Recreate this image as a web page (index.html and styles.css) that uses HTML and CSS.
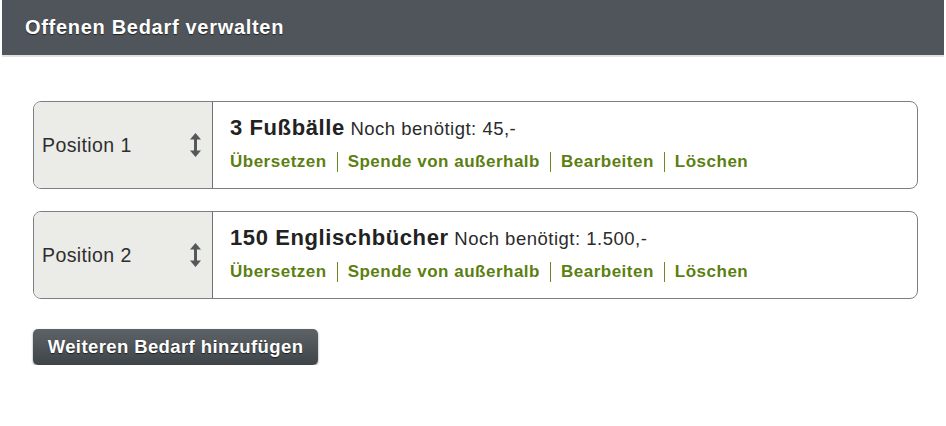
FILE: index.html
```html
<!DOCTYPE html>
<html>
<head>
<meta charset="utf-8">
<link rel="stylesheet" href="styles.css">
</head>
<body>
<div class="header"><h1 class="title">Offenen Bedarf verwalten</h1></div>
<div class="content">
  <div class="card">
    <div class="pos">
      <span class="pos-label">Position 1</span>
      <svg class="arrow" width="13" height="26" viewBox="0 0 13 26"><path d="M6.5 1 L12 7.5 L8 7.5 L8 18.5 L12 18.5 L6.5 25 L1 18.5 L5 18.5 L5 7.5 L1 7.5 Z" fill="#55585b"/></svg>
    </div>
    <div class="info">
      <div class="name"><b>3 Fußbälle</b> Noch benötigt: 45,-</div>
      <div class="links"><a>Übersetzen</a><a>Spende von außerhalb</a><a>Bearbeiten</a><a>Löschen</a></div>
    </div>
  </div>
  <div class="card">
    <div class="pos">
      <span class="pos-label">Position 2</span>
      <svg class="arrow" width="13" height="26" viewBox="0 0 13 26"><path d="M6.5 1 L12 7.5 L8 7.5 L8 18.5 L12 18.5 L6.5 25 L1 18.5 L5 18.5 L5 7.5 L1 7.5 Z" fill="#55585b"/></svg>
    </div>
    <div class="info">
      <div class="name"><b>150 Englischbücher</b> Noch benötigt: 1.500,-</div>
      <div class="links"><a>Übersetzen</a><a>Spende von außerhalb</a><a>Bearbeiten</a><a>Löschen</a></div>
    </div>
  </div>
  <button class="btn">Weiteren Bedarf hinzufügen</button>
</div>
</body>
</html>
```
FILE: styles.css
```css
body {
  margin: 0;
  background: #fff;
  font-family: "Liberation Sans", Arial, sans-serif;
  color: #2b2b2b;
}
.header {
  margin: 0 2px;
  height: 55px;
  background: #50555b;
  border-bottom: 2px solid #dfe3e6;
  display: flex;
  align-items: center;
}
.title {
  margin: 0 0 0 23px;
  font-size: 20px;
  letter-spacing: 0.7px;
  font-weight: bold;
  color: #fff;
  text-shadow: 0 1px 1px rgba(0,0,0,0.6);
}
.content {
  padding: 44px 28px 0 33px;
}
.card {
  display: flex;
  height: 86px;
  border: 1px solid #7c7f82;
  border-radius: 8px;
  overflow: hidden;
  margin-bottom: 22px;
}
.pos {
  width: 179px;
  flex: none;
  background: #ebebe7;
  border-right: 1px solid #6f7275;
  display: flex;
  align-items: center;
  justify-content: space-between;
  padding: 0 10px 0 8px;
  box-sizing: border-box;
}
.pos-label {
  font-size: 19.5px;
  letter-spacing: 0.4px;
  color: #2e2e2e;
}
.arrow { display: block; }
.info {
  padding: 13px 0 0 17px;
}
.name {
  font-size: 18.5px;
  letter-spacing: 0.5px;
  color: #2b2b2b;
  line-height: 26px;
}
.name b {
  font-size: 22px;
  letter-spacing: 0.6px;
  color: #222;
}
.links {
  margin-top: 10px;
  display: flex;
  font-size: 17px;
  letter-spacing: 0.5px;
  font-weight: bold;
  line-height: 20px;
}
.links a {
  color: #5c7f12;
  padding: 0 10px;
  border-left: 1px solid #6a8a22;
}
.links a:first-child {
  padding-left: 0;
  border-left: none;
}
.btn {
  margin-top: 8px;
  width: 285px;
  height: 36px;
  border: none;
  border-radius: 5px;
  background: linear-gradient(#5e6368, #3f4448);
  box-shadow: 0 1px 2px rgba(0,0,0,0.5);
  color: #fff;
  font-family: "Liberation Sans", Arial, sans-serif;
  font-size: 18.5px;
  letter-spacing: 0.4px;
  font-weight: bold;
  text-shadow: 0 1px 1px rgba(0,0,0,0.6);
  padding: 0;
}
```
